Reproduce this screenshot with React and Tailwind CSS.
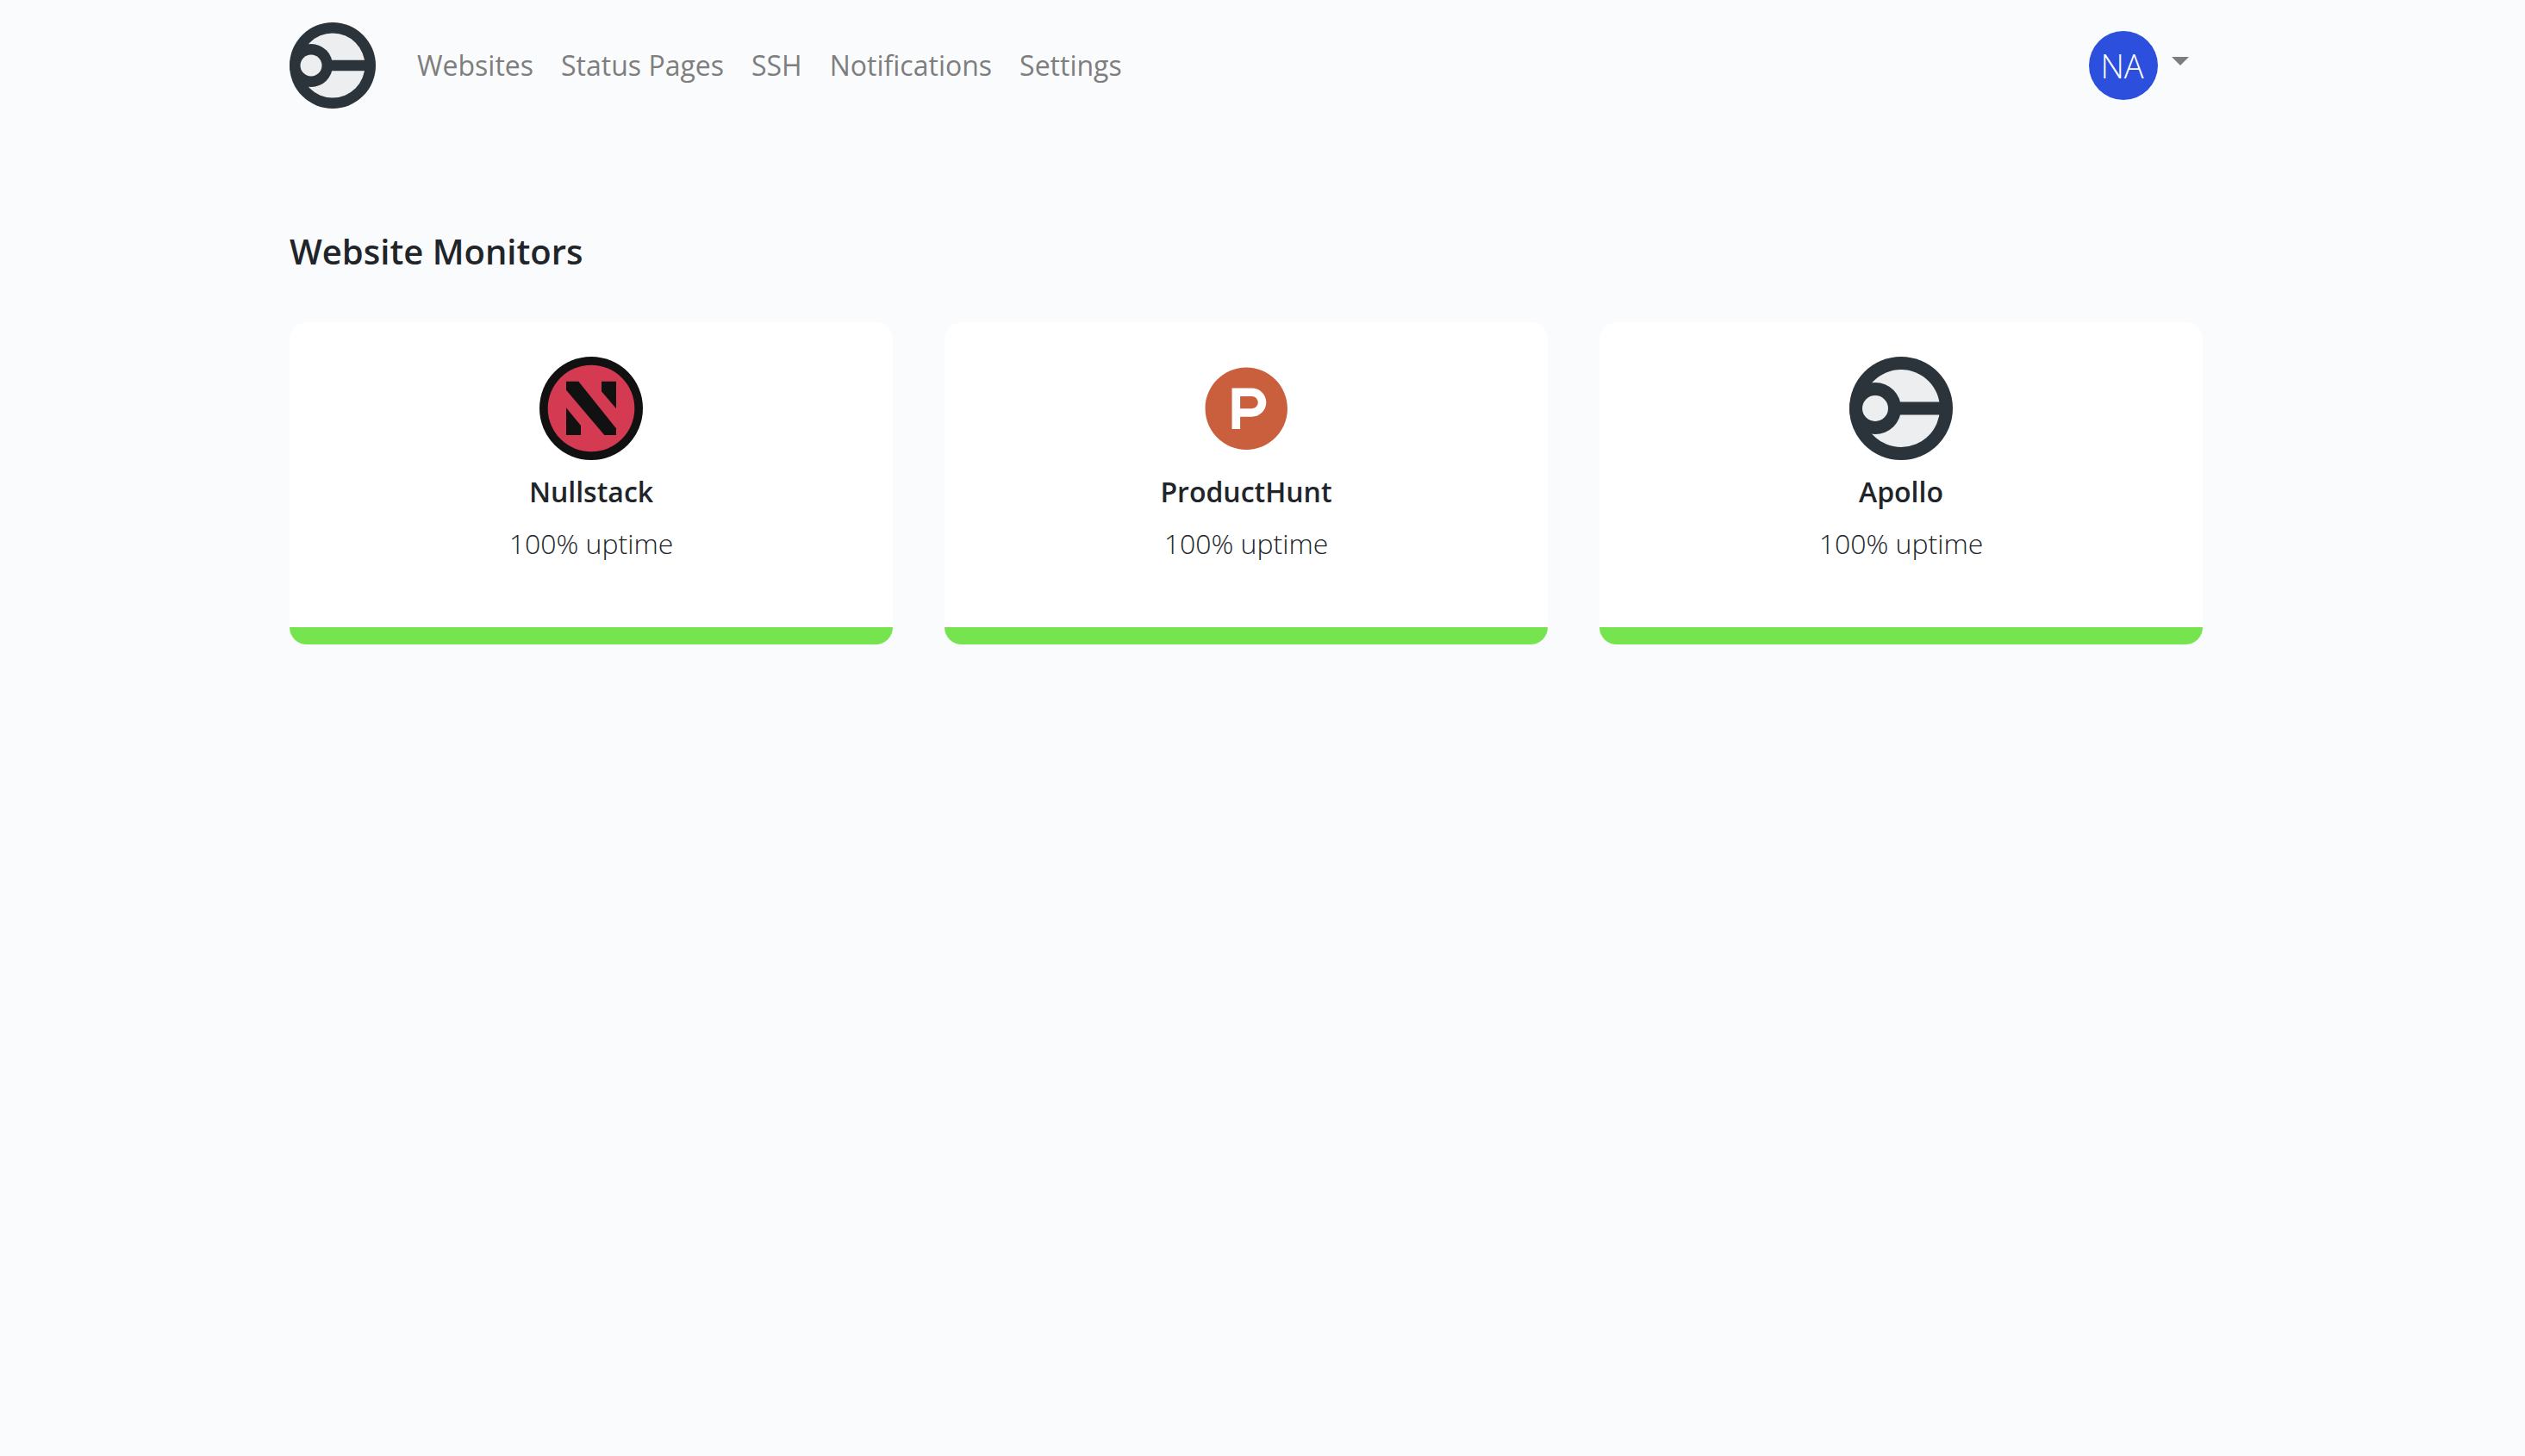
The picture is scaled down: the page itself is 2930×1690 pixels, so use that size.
import React from 'react';
import { FaProductHunt } from 'react-icons/fa';

const navLinks = ['Websites', 'Status Pages', 'SSH', 'Notifications', 'Settings'];

const ApolloLogo = ({ className }) => (
  <svg viewBox="0 0 8 8" className={className} aria-hidden="true">
    <circle cx="4" cy="4" r="4" fill="#2b343b" />
    <circle cx="4" cy="4" r="3" fill="#edeef0" />
    <rect x="3.5" y="3.5" width="4" height="1" fill="#2b343b" />
    <circle cx="2" cy="4" r="2" fill="#2b343b" />
    <circle cx="2" cy="4" r="1" fill="#edeef0" />
  </svg>
);

const NullstackLogo = ({ className }) => (
  <svg viewBox="0 0 360 360" className={className} aria-hidden="true">
    <circle cx="180" cy="180" r="180" fill="#111111" />
    <circle cx="180" cy="180" r="151" fill="#d53a53" />
    <g fill="#111111">
      <path d="M93 86h43l131 164v23h-41L93 116z" />
      <path d="M216 86h51v95l-51-60z" />
      <path d="M93 178l51 62v33H93z" />
    </g>
  </svg>
);

const monitors = [
  { name: 'Nullstack', uptime: '100% uptime', logo: <NullstackLogo className="size-[120px]" /> },
  { name: 'ProductHunt', uptime: '100% uptime', logo: <FaProductHunt className="size-[98.5px] text-[#c95f3c]" /> },
  { name: 'Apollo', uptime: '100% uptime', logo: <ApolloLogo className="size-[120px]" /> },
];

const Navbar = () => (
  <header className="flex h-[152px] items-center">
    <a href="#" aria-label="Apollo">
      <ApolloLogo className="size-[100px]" />
    </a>
    <nav className="ml-12 flex gap-8 text-[32px] leading-[48px] text-[#7e7e7e]">
      {navLinks.map((link) => (
        <a key={link} href="#">{link}</a>
      ))}
    </nav>
    <button className="mr-4 ml-auto flex items-center gap-4">
      <span className="flex size-20 items-center justify-center rounded-full bg-[#2d4fdd] pr-[3px] text-[38px] font-light text-white">
        NA
      </span>
      {/* Caret */}
      <span className="mb-2.5 border-x-[10px] border-t-[10px] border-x-transparent border-t-[#7e7e7e]" />
    </button>
  </header>
);

const MonitorCard = ({ name, uptime, logo }) => (
  <div className="flex h-[374px] flex-col items-center overflow-hidden rounded-[20px] bg-white pt-10">
    <div className="flex size-[120px] items-center justify-center">{logo}</div>
    <h2 className="mt-[18px] text-[32px] leading-[38px] font-semibold">{name}</h2>
    <p className="mt-[17px] text-[32px] leading-[48px] font-light">{uptime}</p>
    <div className="mt-auto h-5 w-full bg-[#75e44f]" />
  </div>
);

export default function App() {
  return (
    <div className="min-h-screen bg-[#fafbfd] font-['Open_Sans',sans-serif] text-[#212529]">
      <div className="ml-[336px] w-[2220px]">
        <Navbar />
        <main className="pt-[116px]">
          <h1 className="text-[40px] leading-[48px] font-semibold">Website Monitors</h1>
          <div className="mt-[58px] grid grid-cols-3 gap-[60px]">
            {monitors.map((monitor) => (
              <MonitorCard key={monitor.name} {...monitor} />
            ))}
          </div>
        </main>
      </div>
    </div>
  );
}
